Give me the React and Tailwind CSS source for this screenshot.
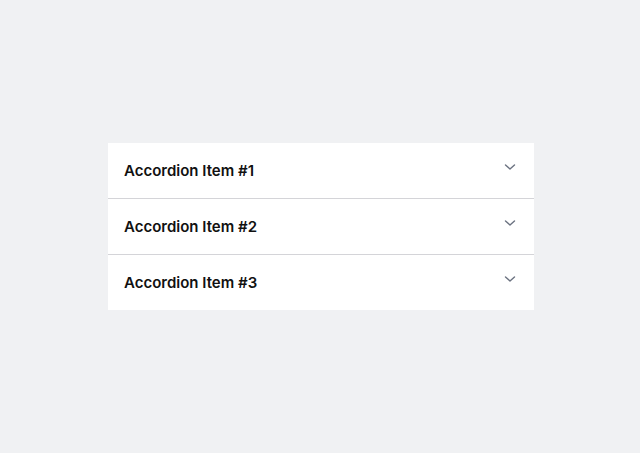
import React from "react";

function Chevron() {
  return (
    <svg width="12" height="12" viewBox="0 0 12 12" fill="none">
      <polyline points="1.5,4 6,8 10.5,4" stroke="#6b7280" strokeWidth="1.4" strokeLinecap="round" strokeLinejoin="round" />
    </svg>
  );
}

export default function App() {
  const items = ["Accordion Item #1", "Accordion Item #2", "Accordion Item #3"];
  return (
    <div className="w-full h-[453px] bg-[#f0f1f3] flex items-center justify-center pl-[2px]" style={{ fontFamily: "Inter, 'Noto Sans', sans-serif" }}>
      <div className="w-[426px] bg-white flex flex-col">
        {items.map((t, i) => (
          <div key={t} className={"flex items-start justify-between pl-4 pr-[18px] pt-[18px] " + (i < 2 ? "h-[56px] border-b border-[#d4d4d8]" : "h-[55px]")}>
            <span className="text-[15px] font-semibold text-[#111111] leading-[20px]">{t}</span>
            <Chevron />
          </div>
        ))}
      </div>
    </div>
  );
}
